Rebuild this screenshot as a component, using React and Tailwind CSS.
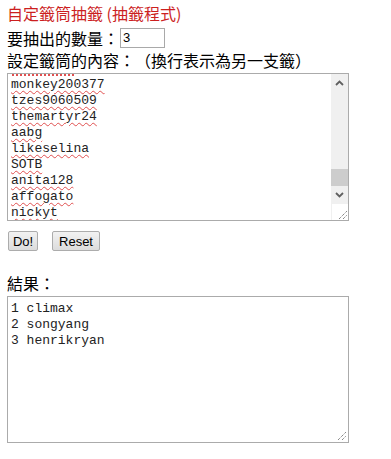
import React from "react";

const cjk = { fontFamily: '"Noto Sans CJK TC", "Noto Sans", sans-serif' };

const names = [
  "monkey200377",
  "tzes9060509",
  "themartyr24",
  "aabg",
  "likeselina",
  "SOTB",
  "anita128",
  "affogato",
  "nickyt",
];

function Grip() {
  return (
    <svg width="12" height="12" viewBox="0 0 12 12" className="block">
      <path d="M3 11 L11 3" stroke="#555" strokeWidth="1" strokeDasharray="1 1" />
      <path d="M7 11 L11 7" stroke="#555" strokeWidth="1" strokeDasharray="1 1" />
    </svg>
  );
}

function Arrow({ up }) {
  return (
    <svg width="9" height="6" viewBox="0 0 9 6" className="block">
      <polyline
        points={up ? "1,5 4.5,1.5 8,5" : "1,1 4.5,4.5 8,1"}
        fill="none"
        stroke="#606060"
        strokeWidth="1.8"
      />
    </svg>
  );
}

export default function App() {
  return (
    <div
      className="w-[391px] h-[459px] bg-white pl-[7px] text-black [text-spacing-trim:space-all]"
      style={cjk}
    >
      <div className="pt-[1px] h-[25px] leading-[24px] text-[16px] text-[#cc1f1f] whitespace-nowrap">
        自定籤筒抽籤 (抽籤程式)
      </div>
      <div className="mt-[3px] flex items-center h-[20px] text-[16px] leading-[20px]">
        <span className="whitespace-nowrap">要抽出的數量：</span>
        <div
          className="ml-[1px] w-[45px] h-[20px] border border-[#a9a9a9] pl-[2px] text-[13px] leading-[18px]"
          style={{ fontFamily: '"Liberation Sans", Arial, sans-serif' }}
        >
          3
        </div>
      </div>
      <div className="h-[25px] leading-[25px] text-[16px] whitespace-nowrap">
        設定籤筒的內容：（換行表示為另一支籤）
      </div>
      <div className="w-[342px] h-[148px] border border-[#ababab] flex">
        <div
          className="flex-1 overflow-hidden pl-[3px] text-[13px] leading-[16px] text-[#222]"
          style={{ fontFamily: '"Liberation Mono", "Courier New", monospace' }}
        >
          <div className="h-[3px] flex items-start">
            <div className="ml-[1px] w-[62px] h-[2px] border-b-2 border-dotted border-[#e05050]" />
          </div>
          {names.map((n) => (
            <div key={n} className="h-[16px] whitespace-nowrap">
              <span className="underline decoration-wavy decoration-[#e05050] decoration-1 underline-offset-[2px]">
                {n}
              </span>
            </div>
          ))}
        </div>
        <div className="w-[17px] flex flex-col bg-[#f0f0f0]">
          <div className="h-[17px] flex items-center justify-center">
            <Arrow up />
          </div>
          <div className="flex-1 flex flex-col justify-end">
            <div className="h-[17px] bg-[#cdcdcd]" />
          </div>
          <div className="h-[17px] flex items-center justify-center">
            <Arrow />
          </div>
          <div className="h-[17px] bg-white border-l border-t border-[#f0f0f0] flex items-end justify-end">
            <Grip />
          </div>
        </div>
      </div>
      <div
        className="mt-[10px] flex gap-[14px] ml-[1px] text-[13px]"
        style={{ fontFamily: '"Liberation Sans", Arial, sans-serif' }}
      >
        <div className="w-[30px] h-[20px] border border-[#acacac] rounded-[2px] bg-gradient-to-b from-[#f2f2f2] to-[#dcdcdc] flex items-center justify-center leading-none">
          Do!
        </div>
        <div className="w-[48px] h-[20px] border border-[#acacac] rounded-[2px] bg-gradient-to-b from-[#f2f2f2] to-[#dcdcdc] flex items-center justify-center leading-none">
          Reset
        </div>
      </div>
      <div className="mt-[20px] h-[25px] leading-[25px] text-[16px]">結果：</div>
      <div
        className="relative w-[342px] h-[147px] border border-[#ababab] pl-[3px] pt-[4px] text-[13px] leading-[16px] text-[#222]"
        style={{ fontFamily: '"Liberation Mono", "Courier New", monospace' }}
      >
        <div className="whitespace-pre">1 climax</div>
        <div className="whitespace-pre">2 songyang</div>
        <div className="whitespace-pre">3 henrikryan</div>
        <div className="absolute right-[1px] bottom-[1px]">
          <Grip />
        </div>
      </div>
    </div>
  );
}
